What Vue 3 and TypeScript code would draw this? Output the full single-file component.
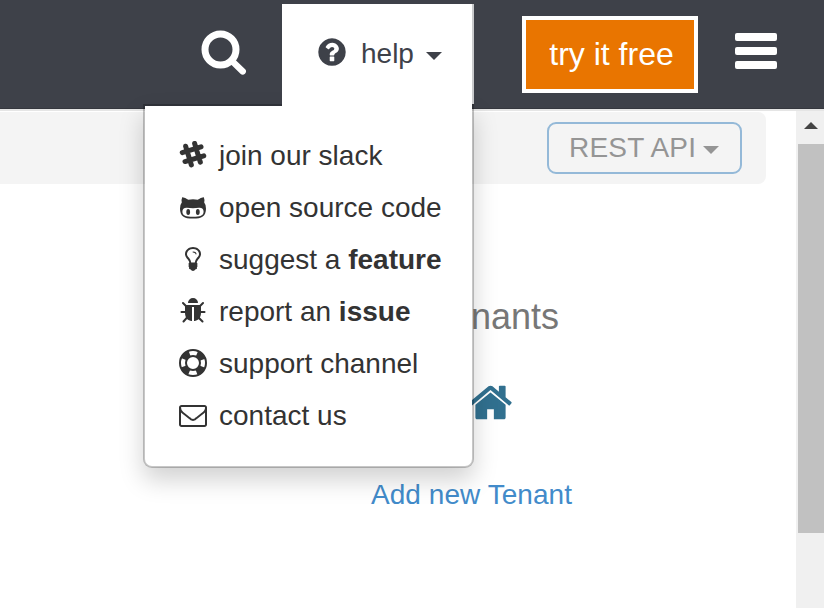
<script setup lang="ts">
interface MenuItem {
  icon: 'slack' | 'github' | 'bulb' | 'bug' | 'ring' | 'mail'
  text: string
  strong?: string
}

const items: MenuItem[] = [
  { icon: 'slack', text: 'join our slack' },
  { icon: 'github', text: 'open source code' },
  { icon: 'bulb', text: 'suggest a ', strong: 'feature' },
  { icon: 'bug', text: 'report an ', strong: 'issue' },
  { icon: 'ring', text: 'support channel' },
  { icon: 'mail', text: 'contact us' },
]

const paths: Record<string, string> = {
  bulb: 'M1120 576q0 13-9.5 22.5t-22.5 9.5-22.5-9.5-9.5-22.5q0-46-54-71t-106-25q-13 0-22.5-9.5t-9.5-22.5 9.5-22.5 22.5-9.5q50 0 99.5 16t87 54 37.5 90zm160 0q0-72-34.5-134t-90-101.5-123-62-136.5-22.5-136.5 22.5-123 62-90 101.5-34.5 134q0 101 68 180 10 11 30.5 33t30.5 33q128 153 141 298h228q13-145 141-298 10-11 30.5-33t30.5-33q68-79 68-180zm128 0q0 155-103 268-45 49-74.5 87t-59.5 95.5-34 107.5q47 28 47 82 0 37-25 64 25 27 25 64 0 52-45 81 13 23 13 47 0 46-31.5 71t-77.5 25q-20 44-60 70t-87 26-87-26-60-70q-46 0-77.5-25t-31.5-71q0-24 13-47-45-29-45-81 0-37 25-64-25-27-25-64 0-54 47-82-4-50-34-107.5t-59.5-95.5-74.5-87q-103-113-103-268 0-99 44.5-184.5t117-142 164-89 186.5-32.5 186.5 32.5 164 89 117 142 44.5 184.5z',
  bug: 'M1696 960q0 26-19 45t-45 19h-224q0 171-67 290l208 209q19 19 19 45t-19 45q-18 19-45 19t-45-19l-198-197q-5 5-15 13t-42 28.5-65 36.5-82 29-97 13v-896h-128v896q-51 0-101.5-13.5t-87-33-66-39-43.5-32.5l-15-14-183 207q-20 21-48 21-24 0-43-16-19-18-20.5-44.5t15.5-46.5l202-227q-58-114-58-274h-224q-26 0-45-19t-19-45 19-45 45-19h224v-294l-173-173q-19-19-19-45t19-45 45-19 45 19l173 173h844l173-173q19-19 45-19t45 19 19 45-19 45l-173 173v294h224q26 0 45 19t19 45zm-480-576h-640q0-133 93.5-226.5t226.5-93.5 226.5 93.5 93.5 226.5z',
  mail: 'M1664 1504v-768q-32 36-69 66-268 206-426 338-51 43-83 67t-86.5 48.5-102.5 24.5h-2q-48 0-102.5-24.5t-86.5-48.5-83-67q-158-132-426-338-37-30-69-66v768q0 13 9.5 22.5t22.5 9.5h1472q13 0 22.5-9.5t9.5-22.5zm0-1051v-24.5l-.5-13-3-12.5-5.5-9-9-7.5-14-2.5h-1472q-13 0-22.5 9.5t-9.5 22.5q0 168 147 284 193 152 401 317 6 5 35 29.5t46 37.5 44.5 31.5 50.5 27.5 43 9h2q20 0 43-9t50.5-27.5 44.5-31.5 46-37.5 35-29.5q208-165 401-317 54-43 100.5-115.5t46.5-131.5zm128-37v1088q0 66-47 113t-113 47h-1472q-66 0-113-47t-47-113v-1088q0-66 47-113t113-47h1472q66 0 113 47t47 113z',
}
</script>

<template>
  <div class="page">
    <header class="header">
      <svg class="search" viewBox="0 0 48 48">
        <circle cx="20.5" cy="21.5" r="15.5" fill="none" stroke="#fff" stroke-width="7" />
        <path d="M32 33L42.700 43.400" stroke="#fff" stroke-width="6.400" stroke-linecap="round" />
      </svg>

      <div class="help">
        <button class="tab">
          <svg class="question" viewBox="0 0 1792 1792"><path d="M1024 1376v-192q0-14-9-23t-23-9h-192q-14 0-23 9t-9 23v192q0 14 9 23t23 9h192q14 0 23-9t9-23zm256-672q0-88-55.5-163t-138.5-116-170-41q-243 0-371 213-15 24 8 42l132 100q7 6 19 6 16 0 25-12 53-68 86-92 34-24 86-24 48 0 85.5 26t37.5 59q0 38-20 61t-68 45q-63 28-115.5 86.5t-52.5 125.5v36q0 14 9 23t23 9h192q14 0 23-9t9-23q0-19 21.5-49.5t54.5-49.5q32-18 49-28.5t46-35 44.5-48 28-60.5 12.5-81zm384 192q0 209-103 385.5t-279.5 279.5-385.5 103-385.5-103-279.5-279.5-103-385.5 103-385.5 279.5-279.5 385.5-103 385.5 103 279.5 279.5 103 385.5z" /></svg>
          <span>help</span>
          <i class="caret"></i>
        </button>

        <ul class="menu">
          <li v-for="item in items" :key="item.icon">
            <svg v-if="item.icon === 'slack'" class="icon" viewBox="0 0 28 28">
              <g transform="rotate(-17 14 13.200)" stroke="#333" stroke-width="5" stroke-linecap="round">
                <path d="M9.300 3.400V23M18.700 3.400V23M4.200 8.500H23.800M4.200 17.900H23.800" />
              </g>
            </svg>
            <svg v-else-if="item.icon === 'github'" class="icon" viewBox="0 0 28 28">
              <path d="M3.200 4.200Q5.700 4 9.300 6.700Q14 5.800 18.700 6.700Q22.300 4 24.800 4.200Q26 7 25.200 9.600Q27.200 12 27 15.700C26.800 23.200 23 25.600 14 25.600S1.200 23.200 1 15.700Q.8 12 2.800 9.600Q2 7 3.200 4.200Z" />
              <path fill="#fff" d="M8 14.800Q14 15.600 20 14.800C23 14.600 24.600 16.200 24.600 18.700C24.600 22.700 21 23.700 14 23.700S3.400 22.700 3.400 18.700C3.400 16.200 5 14.600 8 14.800Z" />
              <ellipse cx="9.200" cy="19" rx="1.900" ry="2.900" />
              <ellipse cx="18.800" cy="19" rx="1.900" ry="2.900" />
            </svg>
            <svg v-else-if="item.icon === 'ring'" class="icon" viewBox="0 0 28 28">
              <g fill="none" stroke="#333">
                <circle cx="14" cy="14" r="13" stroke-width="2" />
                <circle cx="14" cy="14" r="7" stroke-width="2" />
                <circle cx="14" cy="14" r="10" stroke-width="6" stroke-dasharray="8.200 7.508" stroke-dashoffset="-3.754" />
              </g>
            </svg>
            <svg v-else class="icon" viewBox="0 0 1792 1792"><path :d="paths[item.icon]" /></svg>
            <span class="label">{{ item.text }}<b v-if="item.strong">{{ item.strong }}</b></span>
          </li>
        </ul>
      </div>

      <button class="try">try it free</button>
      <div class="burger"><i></i><i></i><i></i></div>
    </header>

    <div class="body">
      <main class="main">
        <div class="toolbar">
          <button class="api"><span>REST API</span><i class="caret"></i></button>
        </div>
        <section class="tenants">
          <h2>Tenants</h2>
          <svg class="home" viewBox="0 0 1792 1792"><path d="M1472 992v480q0 26-19 45t-45 19h-384v-384h-256v384h-384q-26 0-45-19t-19-45v-480q0-1 .5-3t.5-3l575-474 575 474q1 2 1 6zm223-69l-62 74q-8 9-21 11h-3q-13 0-21-7l-692-577-692 577q-12 8-24 7-13-2-21-11l-62-74q-8-10-7-23.5t11-21.5l719-599q32-26 76-26t76 26l244 204v-195q0-14 9-23t23-9h192q14 0 23 9t9 23v408l219 182q10 8 11 21.5t-7 23.5z" /></svg>
          <a class="add">Add new Tenant</a>
        </section>
      </main>
      <aside class="scrollbar">
        <i class="up"></i>
        <div class="thumb"></div>
      </aside>
    </div>
  </div>
</template>

<style>
body {
  margin: 0;
  overflow: hidden;
}
</style>

<style scoped>
* {
  box-sizing: border-box;
}
.page {
  width: 824px;
  height: 608px;
  display: flex;
  flex-direction: column;
  background: #fff;
  font: 28px/52px "Liberation Sans", Arial, sans-serif;
  color: #333;
}
button {
  font: inherit;
  margin: 0;
  padding: 0;
  border: 0;
}
.header {
  display: flex;
  align-items: flex-start;
  flex: none;
  height: 109px;
  background: #3e4149;
  border-bottom: 1px solid #35373e;
}
.search {
  width: 48px;
  height: 48px;
  margin: 28px 34px 0 200px;
}
.help {
  position: relative;
  width: 190px;
  margin-top: 4px;
}
.tab {
  position: relative;
  z-index: 3;
  display: flex;
  align-items: center;
  width: 190px;
  height: 102px;
  padding: 0 0 3px 34px;
  background: #fff;
  color: #3e4149;
}
.tab::after {
  content: "";
  position: absolute;
  left: 190px;
  top: 0;
  width: 2px;
  height: 100px;
  background: #c9cacc;
}
.question {
  width: 32px;
  height: 32px;
  margin: 0 13px 4px 0;
  fill: currentColor;
}
.caret {
  border: 8px solid transparent;
  border-top-color: currentColor;
  border-bottom: 0;
}
.tab .caret {
  margin: 5px 0 0 12px;
}
.menu {
  position: absolute;
  z-index: 2;
  left: -139px;
  top: 100px;
  width: 331px;
  height: 364px;
  margin: 0;
  padding: 23px 0 0 34px;
  list-style: none;
  background: #fff;
  background-clip: padding-box;
  border: 2px solid rgba(0, 0, 0, 0.22);
  border-radius: 0 0 9px 9px;
  box-shadow: 0 12px 24px rgba(0, 0, 0, 0.18);
}
.menu li {
  display: flex;
  align-items: center;
  gap: 12px;
  height: 52px;
  white-space: pre;
}
.label {
  padding-top: 2px;
}
.icon {
  flex: none;
  width: 28px;
  height: 28px;
  fill: #333;
}
.try {
  width: 176px;
  height: 77px;
  margin: 16px 0 0 50px;
  padding: 0 0 2px 3px;
  border: 4px solid #fff;
  background: #e97500;
  color: #fff;
  font-size: 32px;
}
.burger {
  display: flex;
  flex-direction: column;
  gap: 6px;
  width: 42px;
  margin: 33px 0 0 37px;
}
.burger i {
  height: 8px;
  border-radius: 2px;
  background: #fff;
}
.body {
  display: flex;
  flex: 1;
  border-top: 2px solid #e5e5e5;
}
.main {
  width: 796px;
}
.toolbar {
  display: flex;
  justify-content: flex-end;
  width: 766px;
  height: 72px;
  margin-top: 1px;
  padding: 10px 24px 0 0;
  border-radius: 0 8px 8px 0;
  background: #f4f4f4;
}
.api {
  display: flex;
  align-items: center;
  width: 195px;
  height: 52px;
  padding-left: 20px;
  border: 2px solid #94b9d8;
  border-radius: 9px;
  background: transparent;
  color: #959595;
  letter-spacing: 0.2px;
}
.api .caret {
  margin: 3px 0 0 7px;
}
.tenants {
  display: flex;
  flex-direction: column;
  align-items: flex-start;
  padding: 107px 0 0 371px;
}
h2 {
  margin: 0 0 0 62px;
  font-size: 36px;
  font-weight: 400;
  color: #777;
}
.home {
  width: 47px;
  height: 47px;
  margin: 36px 0 0 96px;
  fill: #31708f;
}
.add {
  margin-top: 43px;
  color: #428bca;
  letter-spacing: 0.05px;
}
.scrollbar {
  display: flex;
  flex-direction: column;
  width: 28px;
  padding: 11px 0 0 2px;
  background: #f0f0f0;
}
.up {
  width: 0;
  margin-left: 6px;
  border: 7px solid transparent;
  border-top: 0;
  border-bottom-color: #444;
}
.thumb {
  height: 389px;
  margin-top: 15px;
  background: #c1c1c1;
}
</style>
